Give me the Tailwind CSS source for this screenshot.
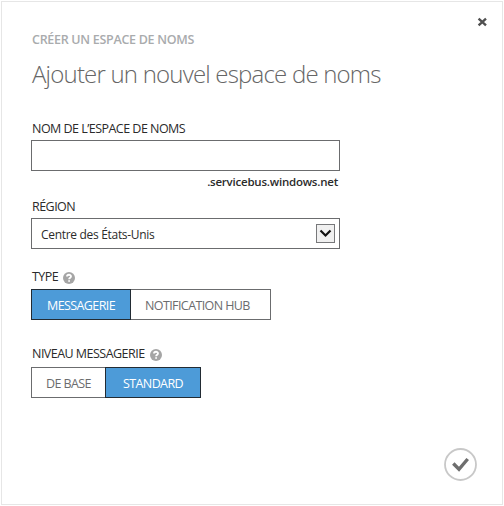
<!DOCTYPE html>
<html lang="fr">
<head>
<meta charset="utf-8">
<title>Créer un espace de noms</title>
<script src="https://cdn.jsdelivr.net/npm/@tailwindcss/browser@4"></script>
</head>
<body class="bg-white p-px font-['Open_Sans','Noto_Sans',sans-serif] text-[#2b2b2b]">
<main class="relative flex h-[504px] w-[502px] flex-col border border-[#e6e6e6] pl-[29px] pt-[30px]">
  <button class="absolute right-[15px] top-[15px] h-[10px] w-[10px]" aria-label="Fermer">
    <svg viewBox="0 0 10 10" class="block h-full w-full" fill="none" stroke="#505050" stroke-width="2.4"><path d="M1.6 1.6 9 8.4M9 1.6 1.6 8.4"/></svg>
  </button>
  <p class="h-4 whitespace-nowrap pl-px text-[12.5px] font-semibold leading-4 tracking-[-0.29px] text-[#a9abad]">CRÉER UN ESPACE DE NOMS</p>
  <h1 class="mt-[10px] h-8 whitespace-nowrap pl-px text-[24px] font-light leading-8 tracking-[-0.8px] text-[#666]">Ajouter un nouvel espace de noms</h1>

  <label class="mt-[31px] h-4 whitespace-nowrap pl-px text-[12.5px] leading-4 tracking-[-0.53px]">NOM DE L’ESPACE DE NOMS</label>
  <div class="mt-[3px] h-[31px] w-[309px] border border-[#6b6c6e]"></div>
  <p class="mt-[3px] h-4 w-[307px] whitespace-nowrap text-right text-[11.5px] font-semibold leading-4 tracking-[-0.22px]">.servicebus.windows.net</p>

  <label class="mt-[9px] h-4 whitespace-nowrap pl-px text-[12.5px] leading-4 tracking-[-0.53px]">RÉGION</label>
  <div class="mt-[3px] flex h-[31px] w-[309px] items-center justify-between border border-[#6b6c6e] pl-[9px] pr-1">
    <span class="mt-[2px] whitespace-nowrap text-[12px] leading-4 tracking-[-0.31px]">Centre des États-Unis</span>
    <span class="block h-[19px] w-[19px] border border-[#77787a] bg-[#f0f0f0]">
      <svg viewBox="0 0 17 17" class="block h-[17px] w-[17px]" fill="none" stroke="#111" stroke-width="2.2"><path d="M3.5 5.5 8.5 10.5 13.5 5.5"/></svg>
    </span>
  </div>

  <div class="mt-[20px] flex h-4 items-center gap-[5px] pl-px">
    <span class="whitespace-nowrap text-[12.5px] leading-4 tracking-[-0.53px]">TYPE</span>
    <svg viewBox="0 0 12 12" class="mt-[2px] block h-3 w-3"><circle cx="6" cy="6" r="6" fill="#a5a5a5"/><path d="M4 4.5C4 2.2 8 2.2 8 4.4 8 5.7 6.1 5.7 6.1 7.3M6.1 8.2V9.8" fill="none" stroke="#fff" stroke-width="1.8"/></svg>
  </div>
  <div class="mt-[4px] flex h-[31px] text-[12.5px] leading-4">
    <button class="z-10 flex w-[100px] items-center justify-center border border-[#222b33] bg-[#4d9bd8] pt-[2px] text-white"><span class="whitespace-nowrap tracking-[-0.6px]">MESSAGERIE</span></button>
    <button class="-ml-px flex w-[141px] items-center border border-[#6b6c6e] pl-[14px] pt-[2px] text-[#6b6c6e]"><span class="whitespace-nowrap tracking-[-0.6px]">NOTIFICATION HUB</span></button>
  </div>

  <div class="mt-[26px] flex h-4 items-center gap-[5px] pl-px">
    <span class="whitespace-nowrap text-[12.5px] leading-4 tracking-[-0.53px]">NIVEAU MESSAGERIE</span>
    <svg viewBox="0 0 12 12" class="mt-[2px] block h-3 w-3"><circle cx="6" cy="6" r="6" fill="#a5a5a5"/><path d="M4 4.5C4 2.2 8 2.2 8 4.4 8 5.7 6.1 5.7 6.1 7.3M6.1 8.2V9.8" fill="none" stroke="#fff" stroke-width="1.8"/></svg>
  </div>
  <div class="mt-[5px] flex h-[31px] text-[12.5px] leading-4">
    <button class="flex w-[75px] items-center border border-[#6b6c6e] pl-[14px] pt-[2px] text-[#6b6c6e]"><span class="whitespace-nowrap tracking-[-0.6px]">DE BASE</span></button>
    <button class="-ml-px flex w-[96px] items-center justify-center border border-[#222b33] bg-[#4d9bd8] pt-[2px] text-white"><span class="whitespace-nowrap tracking-[-0.6px]">STANDARD</span></button>
  </div>

  <button class="absolute bottom-[23px] right-[25px] h-[33px] w-[33px]" aria-label="Valider">
    <svg viewBox="0 0 33 33" class="block h-full w-full" fill="none"><circle cx="16.5" cy="16.5" r="15.5" stroke="#c8c8c8" stroke-width="1.8"/><path d="M9.3 15.5 15 21.3 23.7 11" stroke="#6e6e6e" stroke-width="3.4"/></svg>
  </button>
</main>
</body>
</html>
